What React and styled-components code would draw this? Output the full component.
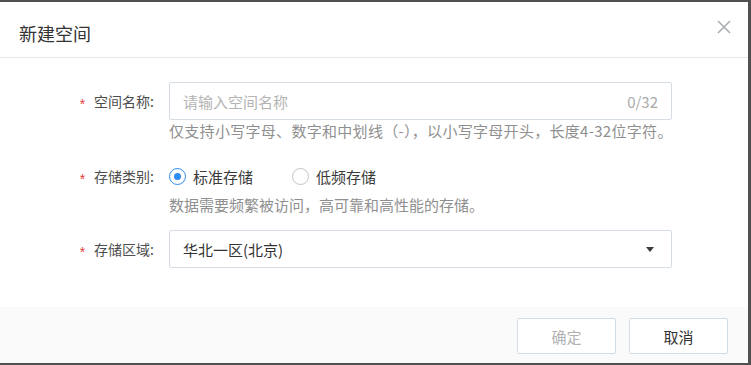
import React from 'react';
import styled, { createGlobalStyle } from 'styled-components';

const GlobalStyle = createGlobalStyle`
html, body{
    margin: 0;
    padding: 0;
    width: 751px;
    height: 365px;
    overflow: hidden;
    background-color: #505050;
    font-family: "Noto Sans CJK SC", "Noto Sans", "Liberation Sans", sans-serif;
}
*{
    box-sizing: border-box;
}
`

const Stage = styled.div`
display: flex;
height: 365px;
padding: 2px 3px 2px 0;
`

const Dialog = styled.div`
flex: 1;
display: flex;
flex-direction: column;
background-color: #ffffff;
`

const Header = styled.div`
height: 56px;
display: flex;
align-items: center;
justify-content: space-between;
padding: 0 17px 0 19px;
border-bottom: 1px solid #e4e7eb;
`

const Title = styled.h3`
margin: 0;
padding-top: 6px;
font-size: 18px;
font-weight: normal;
color: #333333;
`

const CloseButton = styled.button`
border: none;
background: none;
padding: 0 0 5px 0;
cursor: pointer;
display: flex;
`

const Body = styled.div`
flex: 1;
padding-top: 24px;
`

const Row = styled.div`
display: grid;
grid-template-columns: 154px 503px;
column-gap: 15px;
margin-top: ${props => props.top || 0}px;
`

const Label = styled.label`
grid-column: 1;
display: flex;
align-items: center;
justify-content: flex-end;
height: ${props => props.h || 38}px;
font-size: 14px;
color: #4d4d4d;
white-space: nowrap;
`

const Star = styled.span`
color: #e5393b;
font-family: "Liberation Sans", sans-serif;
font-size: 14px;
margin-right: 9px;
transform: translateY(3px);
`

const Field = styled.div`
grid-column: 2;
display: flex;
flex-direction: column;
`

const InputBox = styled.div`
height: 38px;
display: flex;
align-items: center;
justify-content: space-between;
padding: 0 13px 0 13px;
border: 1px solid #d6dde5;
border-radius: 2px;
font-size: 15px;
`

const Input = styled.input`
flex: 1;
border: none;
outline: none;
padding: 0;
font: inherit;
color: #333333;
&::placeholder{
    color: #b4b4b4;
}
`

const Counter = styled.span`
color: #a9a9a9;
font-size: 15px;
`

const Help = styled.p`
margin: ${props => props.top || 1}px 0 0 0;
line-height: 20px;
font-size: 15px;
letter-spacing: ${props => props.spread || 0}px;
color: #8f8f8f;
white-space: nowrap;
`

const RadioGroup = styled.div`
height: 24px;
display: flex;
align-items: center;
`

const RadioOption = styled.label`
display: flex;
align-items: center;
margin-right: 39px;
font-size: 15px;
color: #3a3a3a;
cursor: pointer;
`

const RadioCircle = styled.span`
width: 17px;
height: 17px;
margin-right: 7px;
border-radius: 50%;
border: 1px solid ${props => props.checked ? '#2d8cf0' : '#c3c3c3'};
display: flex;
align-items: center;
justify-content: center;

&::after{
    content: "";
    width: 7px;
    height: 7px;
    border-radius: 50%;
    background-color: #2d8cf0;
    display: ${props => props.checked ? 'block' : 'none'};
}
`

const Select = styled.div`
height: 38px;
display: flex;
align-items: center;
justify-content: space-between;
padding: 0 17px 0 13px;
border: 1px solid #d6dde5;
border-radius: 2px;
font-size: 15px;
color: #333333;
cursor: pointer;
`

const Caret = styled.span`
width: 0;
height: 0;
border-left: 4px solid transparent;
border-right: 4px solid transparent;
border-top: 5px solid #3c3c3c;
`

const Footer = styled.div`
height: 56px;
display: flex;
justify-content: flex-end;
gap: 13px;
padding: 11px 20px 0 0;
background-color: #fafafa;
`

const Button = styled.button`
width: 99px;
height: 36px;
border: 1px solid #d3dde8;
border-radius: 2px;
background-color: #ffffff;
font-family: inherit;
font-size: 15px;
color: ${props => props.disabled ? '#b2b2b2' : '#333333'};
cursor: ${props => props.disabled ? 'not-allowed' : 'pointer'};
`

const storageTypes = [
    { key: 'standard', name: '标准存储', note: '数据需要频繁被访问，高可靠和高性能的存储。' },
    { key: 'infrequent', name: '低频存储', note: '数据访问频率较低，存储成本更低。' },
]

const App = () => {
    const [name, setName] = React.useState('');
    const [type, setType] = React.useState('standard');
    const current = storageTypes.find(t => t.key === type);

    return (
        <>
            <GlobalStyle />
            <Stage>
                <Dialog>
                    <Header>
                        <Title>新建空间</Title>
                        <CloseButton aria-label="关闭">
                            <svg width="14" height="14" viewBox="0 0 14 14">
                                <path d="M1 1 L13 13 M13 1 L1 13" stroke="#a8abb0" strokeWidth="1.5" fill="none" />
                            </svg>
                        </CloseButton>
                    </Header>
                    <Body>
                        <Row>
                            <Label><Star>*</Star>空间名称:</Label>
                            <Field>
                                <InputBox>
                                    <Input
                                        placeholder="请输入空间名称"
                                        maxLength={32}
                                        value={name}
                                        onChange={e => setName(e.target.value)}
                                    />
                                    <Counter>{name.length}/32</Counter>
                                </InputBox>
                                <Help spread={0.3}>仅支持小写字母、数字和中划线（-），以小写字母开头，长度4-32位字符。</Help>
                            </Field>
                        </Row>
                        <Row top={23}>
                            <Label h={24}><Star>*</Star>存储类别:</Label>
                            <Field>
                                <RadioGroup>
                                    {storageTypes.map(t => (
                                        <RadioOption key={t.key} onClick={() => setType(t.key)}>
                                            <RadioCircle checked={t.key === type} />
                                            {t.name}
                                        </RadioOption>
                                    ))}
                                </RadioGroup>
                                <Help top={7}>{current.note}</Help>
                            </Field>
                        </Row>
                        <Row top={15}>
                            <Label><Star>*</Star>存储区域:</Label>
                            <Field>
                                <Select>
                                    华北一区(北京)
                                    <Caret />
                                </Select>
                            </Field>
                        </Row>
                    </Body>
                    <Footer>
                        <Button disabled>确定</Button>
                        <Button>取消</Button>
                    </Footer>
                </Dialog>
            </Stage>
        </>
    );
}

export default App;
